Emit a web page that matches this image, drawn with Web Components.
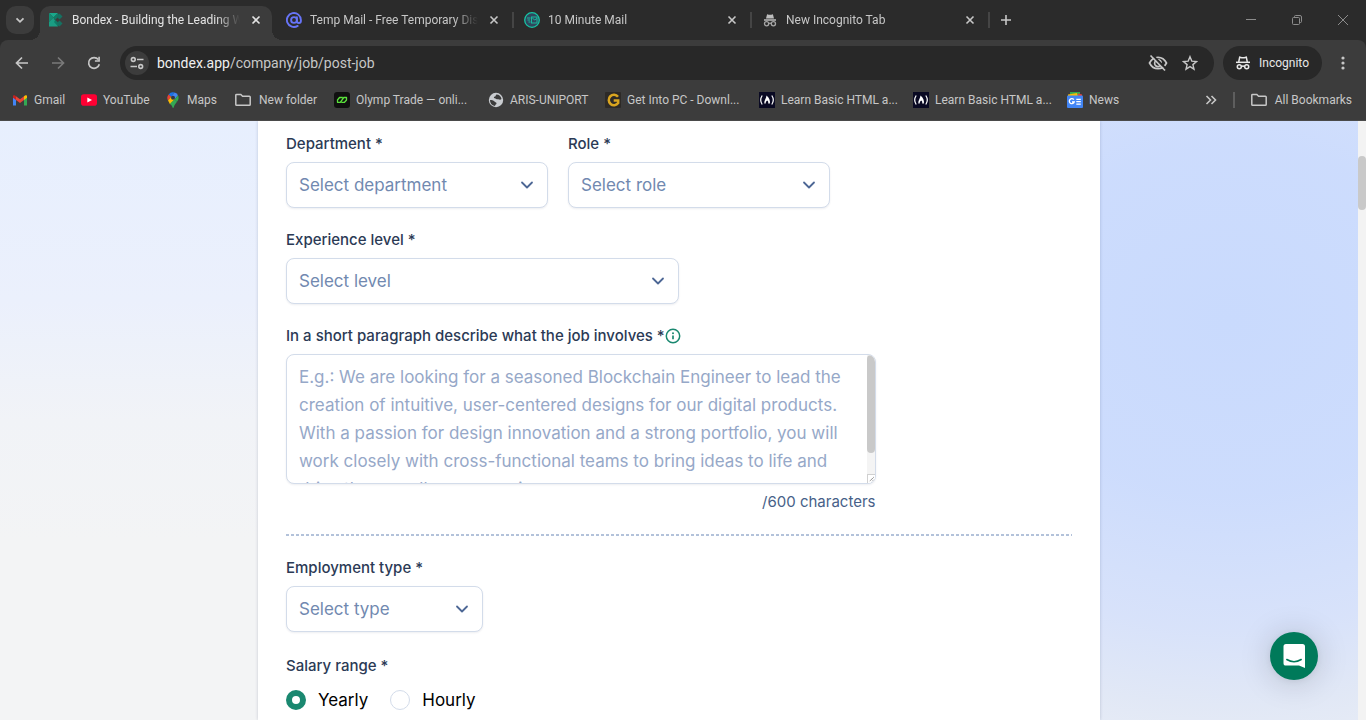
<!DOCTYPE html>
<html lang="en">
<head>
<meta charset="utf-8">
<meta name="viewport" content="width=device-width, initial-scale=1">
<title>Bondex - Building the Leading Web3 Network</title>
<style>
  html, body { margin: 0; height: 100%; }
  body { display: flex; flex-direction: column; overflow: hidden; background: #f3f4f6; }
  browser-chrome { flex: none; }
  job-page { flex: 1; min-height: 0; }
</style>
</head>
<body>
<browser-chrome></browser-chrome>
<job-page></job-page>

<script>
const ICONS = {
  down: '<svg viewBox="0 0 16 16"><path d="M4.5 6.3 8 9.8l3.5-3.5" fill="none" stroke="currentColor" stroke-width="1.8"/></svg>',
  chevron: '<svg viewBox="0 0 16 16"><path d="M3 5.5 8 10.5l5-5" fill="none" stroke="currentColor" stroke-width="1.8" stroke-linecap="round" stroke-linejoin="round"/></svg>',
  close: '<svg viewBox="0 0 16 16"><path d="M4.5 4.5l7 7M11.5 4.5l-7 7" stroke="currentColor" stroke-width="1.6"/></svg>',
  plus: '<svg viewBox="0 0 16 16"><path d="M8 3v10M3 8h10" stroke="currentColor" stroke-width="1.6"/></svg>',
  min: '<svg viewBox="0 0 16 16"><path d="M3 7.5h10" stroke="currentColor"/></svg>',
  restore: '<svg viewBox="0 0 16 16"><g fill="none" stroke="currentColor"><rect x="3.5" y="5.500" width="7" height="7" rx="1"/><path d="M5.500 5.500V4.500a1 1 0 0 1 1-1h4.500a1.500 1.500 0 0 1 1.500 1.500v4.500a1 1 0 0 1-1 1h-1"/></g></svg>',
  winclose: '<svg viewBox="0 0 16 16"><path d="M3 3l10 10M13 3 3 13" stroke="currentColor"/></svg>',
  back: '<svg viewBox="0 0 16 16"><path d="M14 8H3M8 2.500 2.500 8 8 13.500" fill="none" stroke="currentColor" stroke-width="1.7"/></svg>',
  forward: '<svg viewBox="0 0 16 16"><path d="M2 8h11M8 2.500 13.500 8 8 13.500" fill="none" stroke="currentColor" stroke-width="1.7"/></svg>',
  reload: '<svg viewBox="0 0 16 16"><path d="M13.300 9.200A5.400 5.400 0 1 1 12.300 4.600" fill="none" stroke="currentColor" stroke-width="1.700"/><path d="M13.900 1.800v5H8.900V5.200h3.400V1.800z" fill="currentColor"/></svg>',
  tune: '<svg viewBox="0 0 16 16"><g fill="none" stroke="currentColor" stroke-width="1.600"><circle cx="4.300" cy="4.500" r="1.900"/><path d="M8 4.500h6.500M1.500 11.500H8"/><circle cx="11.700" cy="11.500" r="1.900"/></g></svg>',
  eyeoff: '<svg viewBox="0 0 20 20"><g fill="none" stroke="currentColor" stroke-width="1.700"><path d="M1.500 10C3.300 6.400 6.400 4.300 10 4.300s6.700 2.100 8.500 5.700c-1.800 3.600-4.900 5.700-8.500 5.700S3.300 13.600 1.500 10z"/><path d="M7.500 8a3.300 3.300 0 1 0 5 4.300M10 6.800a3.300 3.300 0 0 1 3.200 3.600"/></g><path d="M3.800 1.500 18.300 16" stroke="#282828" stroke-width="2"/><path d="M2.500 2.500 17 17.500" stroke="currentColor" stroke-width="1.700"/></svg>',
  star: '<svg viewBox="0 0 16 16"><path d="M8 1.700l1.800 4.400 4.700.4-3.600 3.100 1.100 4.600L8 11.700l-4 2.500 1.100-4.600L1.500 6.500l4.700-.4z" fill="none" stroke="currentColor" stroke-width="1.400"/></svg>',
  spy: '<svg viewBox="0 0 16 16"><g fill="none" stroke="currentColor" stroke-width="1.500"><path d="M1 7.300h14"/><path d="M3.700 7l1-4.800 2 .6h2.600l2-.6 1 4.800"/><circle cx="4.300" cy="11.800" r="2"/><circle cx="11.700" cy="11.800" r="2"/><path d="M6.300 11.500q1.700-1 3.400 0"/></g></svg>',
  spyfill: '<svg viewBox="0 0 16 16"><path d="M4 6.500 5.100 2.200l1.700.5h2.400l1.700-.5L12 6.500zM2 7.300h12v1.500H2z" fill="#bdbdbd"/><g fill="none" stroke="#a6a6a6" stroke-width="1.300"><circle cx="4.600" cy="11.800" r="2.100"/><circle cx="11.400" cy="11.800" r="2.100"/><path d="M6.700 11.500q1.300-.8 2.600 0"/></g></svg>',
  kebab: '<svg viewBox="0 0 16 16"><g fill="currentColor"><circle cx="8" cy="3" r="1.600"/><circle cx="8" cy="8" r="1.600"/><circle cx="8" cy="13" r="1.600"/></g></svg>',
  more: '<svg viewBox="0 0 16 16"><path d="M3.500 4l4 4-4 4M8.500 4l4 4-4 4" fill="none" stroke="currentColor" stroke-width="1.600"/></svg>',
  folder: '<svg viewBox="0 0 16 16"><path d="M.800 12.500v-9.300a.800.800 0 0 1 .800-.8h4.200l1.800 1.800h6.800a.800.800 0 0 1 .800.800v7.500a.800.800 0 0 1-.800.800H1.600a.800.800 0 0 1-.8-.8z" fill="none" stroke="currentColor" stroke-width="1.500"/></svg>',
  bondex: '<svg viewBox="0 0 16 16"><path d="M1 1h9L5.500 5.500z" fill="#19a88b"/><path d="M1 1v9l4.500-4.500z" fill="#128a72"/><path d="M5.500 5.500 1 10v4.500h9z" fill="#1a9d83"/><path d="M10 1 5.500 5.500 7 8l4-4zM10 14.500 6 10l1.500-2 4 4z" fill="#0f7c67"/><path d="M11.500 1.500l3 3-3 3-3-3z" fill="#147262"/><path d="M11.500 8.500l3 3-3 3-3-3z" fill="#147262"/></svg>',
  at: '<svg viewBox="0 0 16 16"><g fill="none" stroke="#6774f7" stroke-width="1.900" stroke-linecap="round"><circle cx="8" cy="8" r="2.900"/><path d="M10.900 5.200V9a1.900 1.900 0 0 0 4 0V8a7 7 0 1 0-3.200 5.900"/></g></svg>',
  tenmin: '<svg viewBox="0 0 16 16"><circle cx="8" cy="8" r="7.300" fill="#30465d" stroke="#16c5a5" stroke-width="1.300"/><g fill="none" stroke="#18b99e"><path d="M3 6h3.500M3.500 8H6M4.500 10h2"/><rect x="7.500" y="5" width="5.500" height="6"/><path d="M8 5.500l2.500 2.500L13 6.500"/></g></svg>',
  gmail: '<svg viewBox="0 0 16 16"><path d="M1 4v9.500h3V7z" fill="#4285f4"/><path d="M12 7v6.500h3V4z" fill="#34a853"/><path d="M4 4.300V8l4 3 4-3V4.300L8 7.300z" fill="#ea4335"/><path d="M1 4.200V5.800L4 8V4.300l-1-.8C2 2.800 1 3.300 1 4.200z" fill="#c5221f"/><path d="M15 4.200V5.800L12 8V4.300l1-.8c1-.7 2-.2 2 .7z" fill="#fbbc04"/></svg>',
  youtube: '<svg viewBox="0 0 16 16"><rect y="2.300" width="16" height="11.400" rx="2.800" fill="#ff0033"/><path d="M6.300 5.500 11 8l-4.700 2.500z" fill="#fff"/></svg>',
  maps: '<svg viewBox="0 0 16 16"><path d="M3.600 2.400A5.500 5.500 0 0 1 9.700.6L6.200 4.700z" fill="#1a73e8"/><path d="M3.600 2.400 6.200 4.700 3 8.400a5.400 5.400 0 0 1 .6-6z" fill="#ea4335"/><path d="M9.700.6a5.500 5.500 0 0 1 3.300 2.700L9.700 7.200 6.200 4.700z" fill="#4285f4"/><path d="M13 3.300c1.200 2.500.5 4.600-1 6.500L9.700 7.200z" fill="#34a853"/><path d="M3 8.400l3.200-3.700 3.500 2.500-4.600 5.300C4.600 11 3.700 9.700 3 8.400z" fill="#fbbc04"/><path d="M12 9.800c-1.700 2.200-2.600 3.300-3.200 5.400-.3.900-1.100.9-1.400 0-.4-1.200-1-2-2.300-3.700l4.600-4.300z" fill="#34a853"/><circle cx="8" cy="5.700" r="2" fill="#303846"/></svg>',
  olymp: '<svg viewBox="0 0 16 16"><rect width="16" height="16" rx="3" fill="#101010"/><path d="M8.800 5.500H5.500L3.500 8v2.300h2.800L9.800 5.500h2.700V8l-2 2.300H7.300" fill="none" stroke="#5be33c" stroke-width="1.300" stroke-linejoin="round"/></svg>',
  globe: '<svg viewBox="0 0 16 16"><circle cx="8" cy="8" r="7.200" fill="#c9ccd0"/><path d="M8.500 2.500c2.500 0 4.700 1.800 5 4.500-1.700 1.600-2.500 0-3.500.3C8.700 7.500 8 6.500 6.700 6.200 5.500 6 5.600 4.800 7 4.500c1-.2.500-1.500 1.500-2zM2 8c1.500 0 3.500.200 4.500 1.500.8 1.100 2.200.6 2 2-.2 1.100-1.500 1-1.500 2.500A6 6 0 0 1 2 8z" fill="#3c3c3c"/></svg>',
  getpc: '<svg viewBox="0 0 16 16"><rect width="16" height="16" rx="1" fill="#2d2a27"/><path d="M13 4.700A5.200 5.200 0 1 0 13.200 11V8.400H8.700" fill="none" stroke="#d9a520" stroke-width="2.500"/></svg>',
  fcc: '<svg viewBox="0 0 16 16"><rect width="16" height="16" fill="#0a0a23"/><path d="M3.200 3.500q-3 4.500 0 9M12.800 3.500q3 4.500 0 9" fill="none" stroke="#fff" stroke-width="1.200"/><path d="M7.500 3.500c2.700 2.200 3.900 5.200 3.400 8H9.200c.3-1.700-.2-2.500-1-3-.9.800-1.600 1.600-1.500 3H5.300C4.900 8.500 7.400 6.500 7.500 3.500z" fill="#fff"/></svg>',
  news: '<svg viewBox="0 0 16 16"><path d="M3 0h10v4H3z" fill="#34a853"/><path d="M11 1.500l4 1V5h-4z" fill="#ea4335"/><path d="M1 2.500l9-1.500 1 4H1z" fill="#fbbc04"/><rect y="3.500" width="16" height="12.500" rx="1" fill="#4285f4"/><path d="M6.800 7.600A2.500 2.500 0 1 0 7.200 10H5M9.300 7.300h4.500M9.300 9.700h4.500M9.300 12.200h4.500" fill="none" stroke="#fff" stroke-width="1.300"/></svg>',
  info: '<svg viewBox="0 0 16 16"><circle cx="8" cy="8" r="6.700" fill="none" stroke="#1a8870" stroke-width="1.500"/><path d="M8 7.400v3.800" stroke="#1a8870" stroke-width="1.700"/><circle cx="8" cy="5.200" r="1" fill="#1a8870"/></svg>',
  grip: '<svg viewBox="0 0 8 8"><path d="M2 7 6.500 2.500M5 7l1.500-1.500" stroke="#555" stroke-width="1" stroke-dasharray="1.200 .6"/></svg>',
  chat: '<svg viewBox="0 0 24 26"><path d="M4 1h16.500A2.500 2.500 0 0 1 23 3.500V25l-6-2.400H4A2.500 2.500 0 0 1 1.500 20V3.500A2.500 2.500 0 0 1 4 1z" fill="#fff"/><path d="M4.800 16.500q7.200 4.500 14.400 0" fill="none" stroke="#007a5a" stroke-width="1.500" stroke-linecap="round"/></svg>'
};

class Base extends HTMLElement {
  connectedCallback() {
    if (this.shadowRoot) return;
    const t = document.createElement('template');
    t.innerHTML = '<style>*{box-sizing:border-box}button{font:inherit;color:inherit;background:none;border:0;padding:0;margin:0}</style>' + this.render();
    this.attachShadow({ mode: 'open' }).append(t.content.cloneNode(true));
  }
  attr(name, fallback = '') { return this.getAttribute(name) ?? fallback; }
}

customElements.define('ui-icon', class extends Base {
  render() {
    const size = this.attr('size', '16');
    return `<style>:host{display:inline-flex;flex:none;width:${size}px;height:${size}px}svg{display:block;width:100%;height:100%}</style>${ICONS[this.attr('name')]}`;
  }
});

customElements.define('browser-tab', class extends Base {
  render() {
    return `<style>
      :host{display:flex;flex:0 1 232px;min-width:0;height:34px;align-items:center;gap:8px;padding:0 8px 6px;margin-right:6px;position:relative;color:#c7c7c7}
      :host([active]){background:#3c3c3c;border-radius:10px 10px 0 0;color:#e3e3e3}
      :host([active])::before,:host([active])::after{content:"";position:absolute;bottom:0;width:10px;height:10px}
      :host([active])::before{left:-10px;background:radial-gradient(circle at 0 0,transparent 10px,#3c3c3c 10px)}
      :host([active])::after{right:-10px;background:radial-gradient(circle at 100% 0,transparent 10px,#3c3c3c 10px)}
      :host([line])::after{content:"";position:absolute;right:-4px;top:6px;width:2px;height:16px;background:#454545}
      .t{flex:1;min-width:0;overflow:hidden;white-space:nowrap;line-height:16px;mask-image:linear-gradient(90deg,#000 calc(100% - 24px),transparent)}
      button{display:flex}
    </style>
    <ui-icon name="${this.attr('icon')}"></ui-icon><span class="t"><slot></slot></span>
    <button aria-label="Close tab"><ui-icon name="close"></ui-icon></button>`;
  }
});

customElements.define('tool-button', class extends Base {
  render() {
    return `<style>
      :host{display:flex;flex:none;width:var(--w,36px);height:var(--h,34px)}
      button{width:100%;display:flex;align-items:center;justify-content:center;border-radius:10px}
      :host([filled]) button{background:#3c3c3c}
    </style><button aria-label="${this.attr('label')}"><ui-icon name="${this.attr('icon')}" size="${this.attr('size', '16')}"></ui-icon></button>`;
  }
});

customElements.define('bookmark-link', class extends Base {
  render() {
    return `<style>
      :host{display:block;min-width:0}
      a{display:flex;align-items:center;gap:6px;color:#c7c7c7;text-decoration:none;white-space:nowrap;line-height:16px}
      :host([icon=folder]) a{gap:8px}
    </style><a href="#"><ui-icon name="${this.attr('icon')}"></ui-icon><slot></slot></a>`;
  }
});

customElements.define('browser-chrome', class extends Base {
  render() {
    return `<style>
      :host{display:block;background:#2b2b2b;color:#c7c7c7;font:12px/16px Roboto,"Liberation Sans",sans-serif}
      .strip{display:flex;height:40px;padding:6px 0 0 6px}
      .search{--w:28px;--h:28px;margin-right:6px}
      .new{--w:28px;--h:28px}
      .win{margin-left:auto;display:flex;--w:46px;--h:28px;color:#8c8c8c}
      .panel{background:#3c3c3c;border-radius:8px 8px 0 0;border-bottom:1px solid #4a4a4a}
      .bar{display:flex;align-items:center;height:46px;padding:0 2px 0 4px}
      .off{color:#7a7a7a}
      .omni{flex:1;display:flex;align-items:center;height:34px;margin:0 9px 0 8px;padding:0 8px 0 5px;border-radius:17px;background:#282828}
      .site{--w:24px;--h:24px;border-radius:12px;background:#3c3c3c}
      .url{flex:1;min-width:0;margin-left:8px;font-size:14px;line-height:20px;color:#c7c7c7;white-space:nowrap}
      .url b{font-weight:400;color:#f0f0f0}
      .omni .act{--w:32px}
      .inc{display:flex;align-items:center;gap:8px;height:34px;padding:0 13px 0 12px;border-radius:17px;background:#282828;color:#e8e8e8}
      .menu{--w:42px}
      .marks{display:flex;align-items:center;height:34px;padding:0 14px 6px 12px}
      nav{flex:1;display:grid;grid-template-columns:69px 84px 70px 99px 154px 117px 154px 154px 154px 1fr}
      .chev{--w:24px;--h:28px;margin-right:10px}
      .sep{width:2px;height:16px;background:#5e5e5e;margin-right:16px}
    </style>
    <div class="strip">
      <tool-button class="search" filled icon="down" label="Search tabs"></tool-button>
      <browser-tab active icon="bondex">Bondex - Building the Leading Web3</browser-tab>
      <browser-tab line icon="at">Temp Mail - Free Temporary Disposable</browser-tab>
      <browser-tab line icon="tenmin">10 Minute Mail</browser-tab>
      <browser-tab line icon="spyfill">New Incognito Tab</browser-tab>
      <tool-button class="new" icon="plus" label="New tab"></tool-button>
      <div class="win"><tool-button icon="min" label="Minimise"></tool-button><tool-button icon="restore" label="Restore"></tool-button><tool-button icon="winclose" label="Close"></tool-button></div>
    </div>
    <div class="panel">
      <div class="bar">
        <tool-button icon="back" label="Back"></tool-button>
        <tool-button class="off" icon="forward" label="Forward"></tool-button>
        <tool-button icon="reload" label="Reload"></tool-button>
        <div class="omni">
          <tool-button class="site" icon="tune" label="Site information"></tool-button>
          <div class="url" role="textbox" aria-label="Address" contenteditable="plaintext-only"><b>bondex.app</b>/company/job/post-job</div>
          <tool-button class="act" icon="eyeoff" size="20" label="Third-party cookies blocked"></tool-button>
          <tool-button class="act" icon="star" label="Bookmark this tab"></tool-button>
        </div>
        <button class="inc"><ui-icon name="spy"></ui-icon><span>Incognito</span></button>
        <tool-button class="menu" icon="kebab" label="Menu"></tool-button>
      </div>
      <div class="marks">
        <nav>
          <bookmark-link icon="gmail">Gmail</bookmark-link>
          <bookmark-link icon="youtube">YouTube</bookmark-link>
          <bookmark-link icon="maps">Maps</bookmark-link>
          <bookmark-link icon="folder">New folder</bookmark-link>
          <bookmark-link icon="olymp">Olymp Trade — onli...</bookmark-link>
          <bookmark-link icon="globe">ARIS-UNIPORT</bookmark-link>
          <bookmark-link icon="getpc">Get Into PC - Downl...</bookmark-link>
          <bookmark-link icon="fcc">Learn Basic HTML a...</bookmark-link>
          <bookmark-link icon="fcc">Learn Basic HTML a...</bookmark-link>
          <bookmark-link icon="news">News</bookmark-link>
        </nav>
        <tool-button class="chev" icon="more" label="More bookmarks"></tool-button>
        <div class="sep"></div>
        <bookmark-link icon="folder">All Bookmarks</bookmark-link>
      </div>
    </div>`;
  }
});

customElements.define('select-field', class extends Base {
  render() {
    return `<style>
      :host{display:block}
      label{display:block;font-size:15px;font-weight:500;line-height:20px;color:#2b3a55;margin-bottom:8px}
      .box{display:grid;align-items:center}
      select{grid-area:1/1;width:100%;height:46px;appearance:none;border:1px solid #d3dcea;border-radius:8px;background:#fff;color:#7189b0;font:inherit;font-size:17px;padding:0 36px 0 12px;box-shadow:0 1px 2px rgba(20,40,80,.08)}
      ui-icon{grid-area:1/1;justify-self:end;margin-right:13px;color:#4d6795;pointer-events:none}
    </style>
    <label for="s">${this.attr('label')}</label>
    <div class="box"><select id="s"><option>${this.attr('placeholder')}</option></select><ui-icon name="chevron"></ui-icon></div>`;
  }
});

customElements.define('text-field', class extends Base {
  render() {
    return `<style>
      :host{display:block}
      .head{display:flex;align-items:center;margin-bottom:8px}
      label{font-size:15px;font-weight:500;line-height:20px;color:#2b3a55}
      .tip{display:flex}
      .box{display:grid;border:1px solid #d3dcea;border-radius:8px;overflow:hidden;background:#fff;box-shadow:0 1px 2px rgba(20,40,80,.08)}
      textarea{grid-area:1/1;display:block;width:100%;height:128px;resize:none;border:0;margin:0;padding:8px 20px 8px 12px;background:none;font:inherit;font-size:17px;line-height:28px;color:#2b3a55;scrollbar-width:none}
      textarea::placeholder{color:#96a8c8}
      .scroll{grid-area:1/1;justify-self:end;width:8px;display:flex;flex-direction:column;background:#f4f4f4;pointer-events:none}
      .thumb{height:98px;border-radius:4px;background:#c9c9c9}
      .grip{margin-top:auto;width:8px;height:9px;border:solid #d0d0d0;border-width:1px 0 0 1px;background:#fff;display:flex}
      .count{margin-top:8px;text-align:right;font-size:15px;line-height:20px;color:#475f88}
    </style>
    <div class="head"><label for="t">${this.attr('label')}</label><button class="tip" aria-label="More information"><ui-icon name="info"></ui-icon></button></div>
    <div class="box"><textarea id="t" placeholder="${this.attr('placeholder')}"></textarea>
      <div class="scroll"><div class="thumb"></div><div class="grip"><ui-icon name="grip" size="7"></ui-icon></div></div></div>
    <div class="count"><slot></slot></div>`;
  }
});

customElements.define('radio-option', class extends Base {
  render() {
    return `<style>
      :host{display:block}
      label{display:flex;align-items:center;gap:12px;font-size:17px;line-height:20px;color:#000}
      input{appearance:none;flex:none;width:20px;height:20px;margin:0;border:1px solid #d3dcea;border-radius:50%;background:#fff}
      input:checked{border:6px solid #1a8870}
    </style><label><input type="radio" name="period" ${this.hasAttribute('checked') ? 'checked' : ''}><slot></slot></label>`;
  }
});

customElements.define('job-page', class extends Base {
  render() {
    return `<style>
      :host{display:flex;position:relative;overflow:hidden;font-family:Inter,"Liberation Sans",sans-serif}
      main{flex:1;min-width:0;padding:0 20px;
        background:radial-gradient(ellipse 540px 440px at 1230px 200px,#c9dafd 0%,rgba(203,219,253,.95) 40%,rgba(211,223,251,.85) 70%,rgba(218,227,246,.7) 88%,rgba(226,232,247,0) 120%),linear-gradient(#e7effe 0,#ebf0fc 180px,#f1f3f7 300px,#f3f4f5 420px)}
      form{max-width:842px;min-height:100%;margin:0 auto;padding:13px 28px 10px;background:#fff;box-shadow:0 0 3px rgba(30,50,90,.22)}
      .row{display:flex;gap:20px;margin-bottom:22px}
      .third{width:calc(100% / 3)}
      .half{width:50%}
      .quarter{width:25%}
      .wide{width:75%}
      hr{height:2px;border:0;margin:22px 0;background:repeating-linear-gradient(90deg,#b3c2da 0 3px,transparent 3px 5px)}
      .caption{font-size:15px;font-weight:500;line-height:20px;color:#2b3a55;margin:24px 0 14px}
      .radios{display:flex;gap:22px}
      .track{width:8px;background:#f3f3f3;padding-top:35px}
      .thumb{height:54px;border-radius:4px;background:#c9c9c9}
      .chat{position:absolute;right:48px;bottom:40px;width:48px;height:48px;border-radius:50%;background:#007a5a;display:flex;align-items:center;justify-content:center;box-shadow:0 2px 32px rgba(0,0,0,.18),0 1px 6px rgba(0,0,0,.06)}
    </style>
    <main><form>
      <div class="row"><select-field class="third" label="Department *" placeholder="Select department"></select-field><select-field class="third" label="Role *" placeholder="Select role"></select-field></div>
      <div class="row"><select-field class="half" label="Experience level *" placeholder="Select level"></select-field></div>
      <text-field class="wide" label="In a short paragraph describe what the job involves *" placeholder="E.g.: We are looking for a seasoned Blockchain Engineer to lead the creation of intuitive, user-centered designs for our digital products. With a passion for design innovation and a strong portfolio, you will work closely with cross-functional teams to bring ideas to life and drive the overall user experience.">/600 characters</text-field>
      <hr>
      <select-field class="quarter" label="Employment type *" placeholder="Select type"></select-field>
      <div class="caption" id="salary">Salary range *</div>
      <div class="radios" role="radiogroup" aria-labelledby="salary"><radio-option checked>Yearly</radio-option><radio-option>Hourly</radio-option></div>
    </form></main>
    <div class="track"><div class="thumb"></div></div>
    <button class="chat" aria-label="Open chat"><ui-icon name="chat" size="26"></ui-icon></button>`;
  }
});
</script>
</body>
</html>
